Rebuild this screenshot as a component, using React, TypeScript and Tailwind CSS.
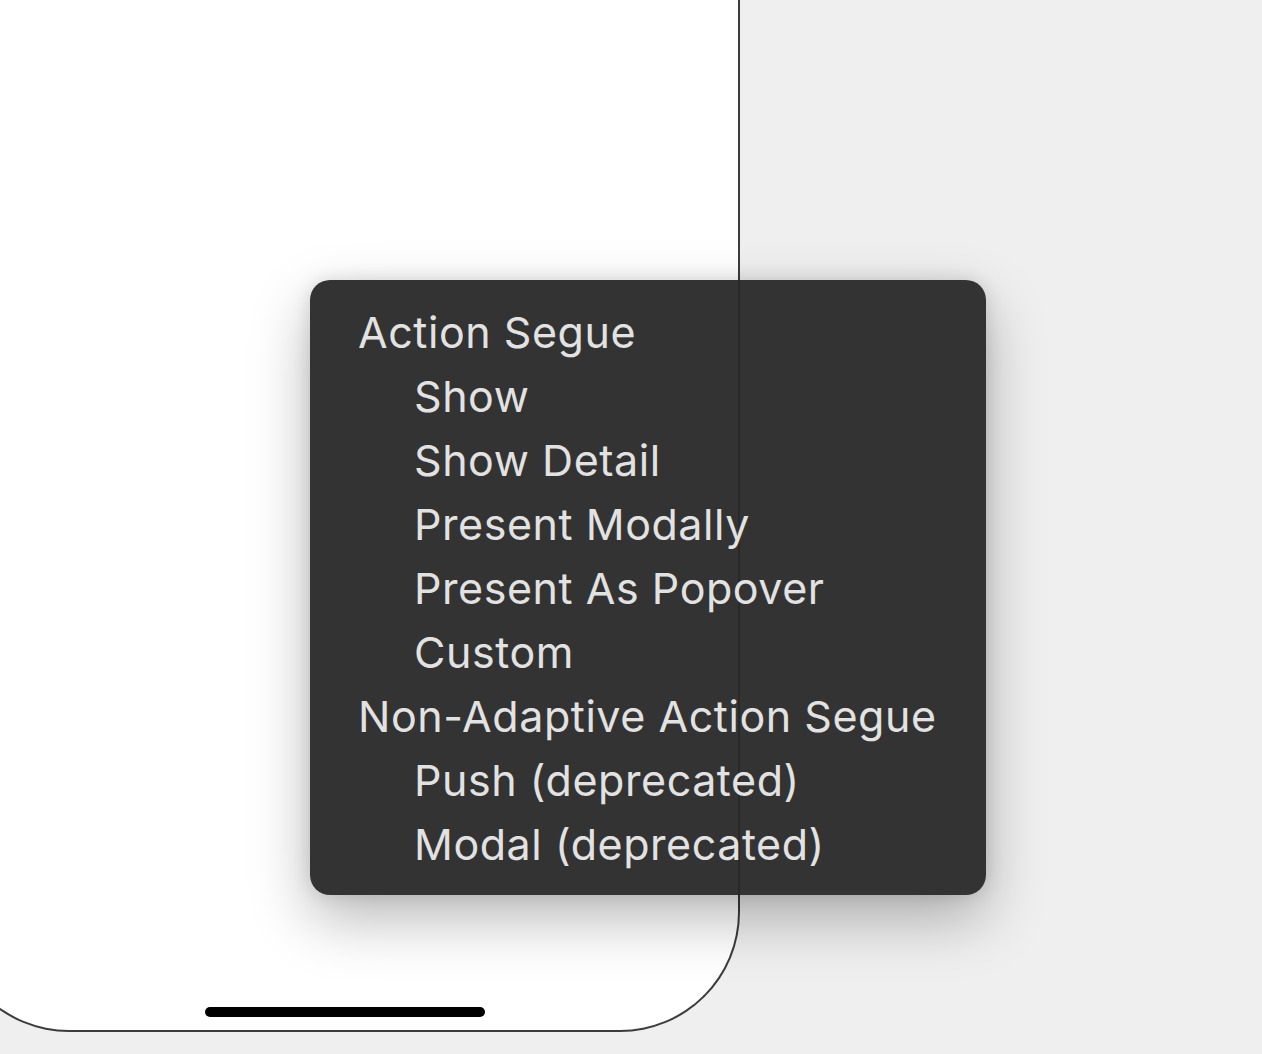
import React from 'react';

type Item = { label: string; heading?: boolean };

const items: Item[] = [
  { label: 'Action Segue', heading: true },
  { label: 'Show' },
  { label: 'Show Detail' },
  { label: 'Present Modally' },
  { label: 'Present As Popover' },
  { label: 'Custom' },
  { label: 'Non-Adaptive Action Segue', heading: true },
  { label: 'Push (deprecated)' },
  { label: 'Modal (deprecated)' },
];

function SegueMenu() {
  return (
    <div className="absolute left-[310px] top-[280px] w-[676px] rounded-[20px] bg-[#282828]/95 pt-[20px] pb-[19px] pl-[48px] shadow-[0_24px_60px_rgba(0,0,0,0.28),0_0_18px_rgba(0,0,0,0.12)]">
      {items.map((item) => (
        <div
          key={item.label}
          className={`h-[64px] flex items-center text-[43px] leading-none tracking-[0.55px] text-[#e2e2e2] ${item.heading ? '' : 'pl-[56px]'}`}
        >
          {item.label}
        </div>
      ))}
    </div>
  );
}

export default function App() {
  return (
    <div
      className="relative w-[1262px] h-[1054px] overflow-hidden bg-[#efefef]"
      style={{ fontFamily: 'Inter, "Noto Sans", sans-serif' }}
    >
      <div className="-ml-[51px] -mt-[200px] w-[791px] h-[1232px] bg-white border-x-2 border-b-2 border-[#3c3c3c] rounded-b-[120px] flex flex-col justify-end items-center pb-[13px]">
        <div className="w-[280px] h-[10px] rounded-full bg-black" />
      </div>
      <SegueMenu />
    </div>
  );
}
